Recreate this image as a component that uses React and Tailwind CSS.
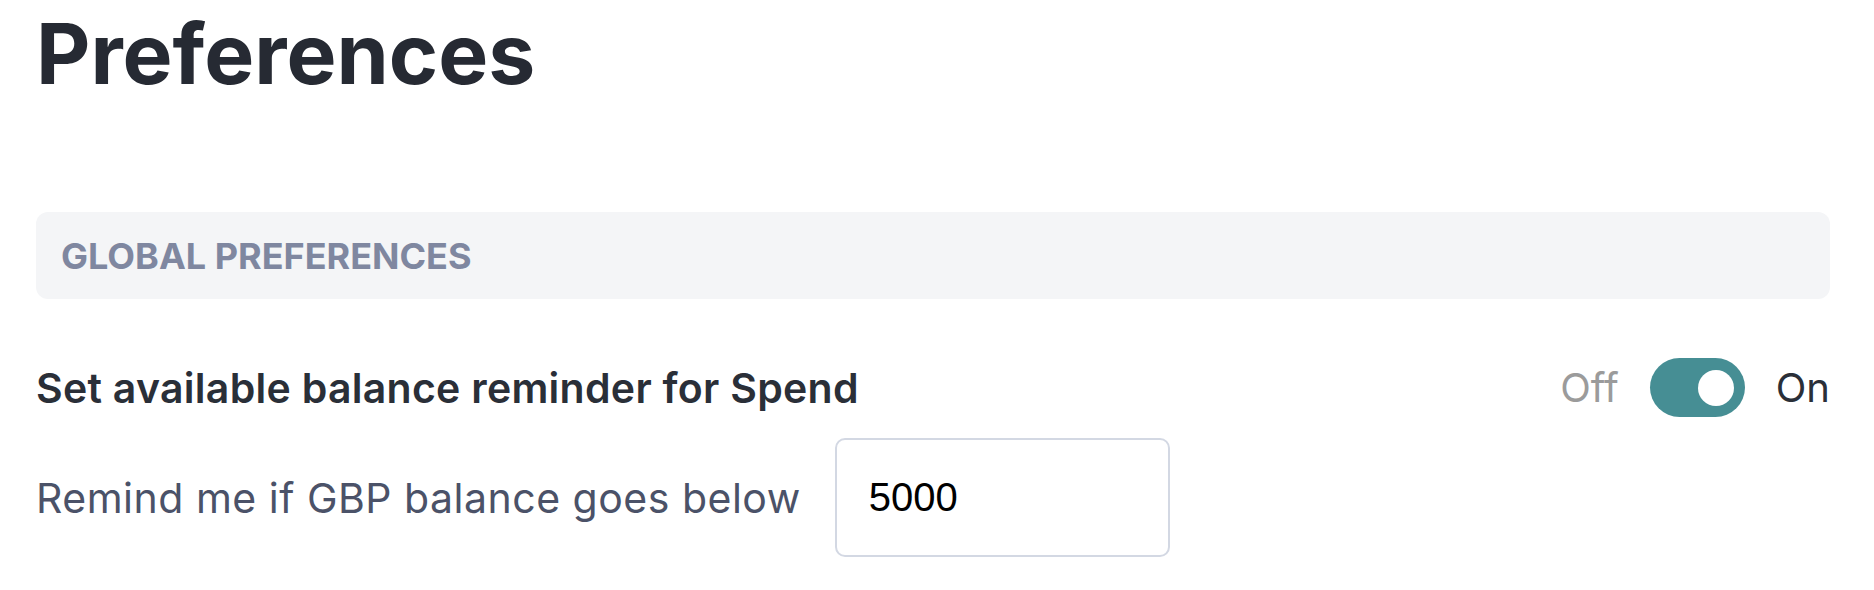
export default function App() {
  return (
    <div className="w-[1874px] h-[590px] bg-white pl-[36px] pr-[44px] pt-[4px] font-['Inter',sans-serif] overflow-hidden">
      <h1 className="text-[84px] leading-[100px] font-bold text-[#262a33]">Preferences</h1>

      <div className="mt-[108px] h-[87px] rounded-[12px] bg-[#f4f5f7] flex items-center px-[25px]">
        <h2 className="text-[36px] leading-[44px] font-bold text-[#7f87a0] uppercase">Global Preferences</h2>
      </div>

      <div className="mt-[59px] h-[59px] flex items-center justify-between">
        <p className="text-[41px] leading-[48px] font-semibold tracking-[0.28px] text-[#2a2f38]">Set available balance reminder for Spend</p>
        <div className="flex items-center gap-[31px]">
          <span className="text-[40px] leading-[48px] text-[#9b9b9b]">Off</span>
          <button className="w-[95px] h-[59px] rounded-full bg-[#468e94] flex items-center justify-end pr-[11px]">
            <span className="w-[36px] h-[36px] rounded-full bg-white block"></span>
          </button>
          <span className="text-[40px] leading-[48px] text-[#2a2f38]">On</span>
        </div>
      </div>

      <div className="mt-[21px] flex items-center gap-[34px]">
        <label className="text-[41px] leading-[48px] tracking-[0.5px] text-[#4b5268]">Remind me if GBP balance goes below</label>
        <input
          type="text"
          defaultValue="5000"
          className="w-[335px] h-[119px] rounded-[10px] border-2 border-[#d3d8e3] pl-[32px] text-[40px] text-black font-['Liberation_Sans',Arial,sans-serif] outline-none"
        />
      </div>
    </div>
  );
}
